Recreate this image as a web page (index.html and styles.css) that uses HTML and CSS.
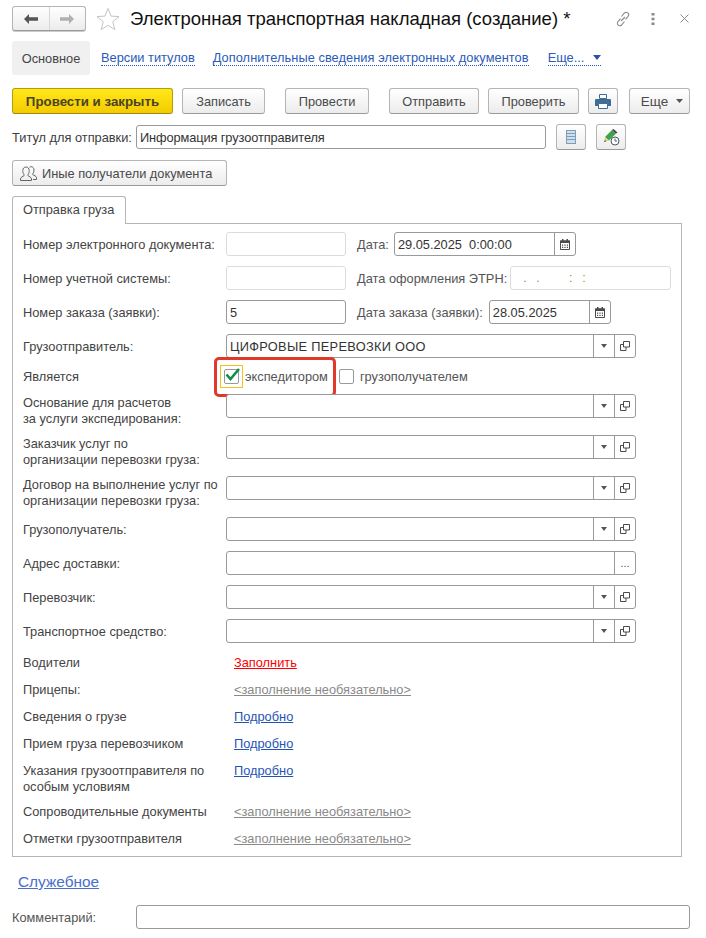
FILE: index.html
```html
<!DOCTYPE html>
<html lang="ru">
<head>
<meta charset="utf-8">
<title>Электронная транспортная накладная (создание)</title>
<link rel="stylesheet" href="styles.css">
</head>
<body>
<svg class="defs" width="0" height="0" aria-hidden="true">
  <symbol id="i-cal" viewBox="0 0 10 11">
    <path d="M.5 2h9v8.500h-9z" fill="none" stroke="#4a4a4a"/>
    <path d="M0 1.500h10V4H0z" fill="#4a4a4a"/>
    <path d="M2 0h1.500v2H2zM6.500 0H8v2H6.500z" fill="#4a4a4a"/>
    <path d="M2 5.500h1.200v1.200H2zM4.400 5.500h1.200v1.200H4.400zM6.800 5.500H8v1.200H6.800zM2 7.800h1.200V9H2zM4.400 7.800h1.200V9H4.400zM6.800 7.800H8V9H6.800z" fill="#4a4a4a"/>
  </symbol>
  <symbol id="i-open" viewBox="0 0 10 10">
    <path d="M3.500 .5h6v5.500h-6z" fill="none" stroke="#4a4a4a"/>
    <path d="M3.500 3.500h-3v6h5.500V6" fill="none" stroke="#4a4a4a"/>
  </symbol>
</svg>

<header class="head">
  <div class="nav">
    <span class="nav-cell">
      <svg width="14" height="10" viewBox="0 0 14 10"><path d="M0 5l5-5v3.200h9v3.600H5V10z" fill="#555"/></svg>
    </span>
    <span class="nav-cell nav-next">
      <svg width="14" height="10" viewBox="0 0 14 10"><path d="M14 5L9 0v3.200H0v3.600h9V10z" fill="#b0b0b0"/></svg>
    </span>
  </div>
  <svg class="star" width="24" height="24" viewBox="0 0 24 24"><path d="M12 1.500l3 7.600 8 .5-6.200 5.100 2 7.900L12 18.300 5.200 22.600l2-7.900L1 9.600l8-.5z" fill="#fff" stroke="#c4c4c4"/></svg>
  <h1 class="title">Электронная транспортная накладная (создание) *</h1>
  <div class="win-tools">
    <svg width="16" height="16" viewBox="0 0 16 16"><g fill="none" stroke="#8a8a8a" stroke-width="1.100"><path d="M6.500 5.500l2.800-3.300a2.400 2.400 0 0 1 3.700 3.200l-2.500 3"/><path d="M9.500 10.500l-2.800 3.300a2.400 2.400 0 0 1-3.700-3.200l2.500-3"/><path d="M6 10l4-4"/></g></svg>
    <svg width="4" height="12" viewBox="0 0 4 12"><path d="M.5 0h3v2.500h-3zM.5 4.700h3v2.500h-3zM.5 9.400h3V12h-3z" fill="#8a8a8a"/></svg>
    <svg width="9" height="9" viewBox="0 0 9 9"><path d="M.5.500l8 8M8.500.500l-8 8" stroke="#8a8a8a" fill="none"/></svg>
  </div>
</header>

<nav class="tabs">
  <a class="tab tab-active">Основное</a>
  <a class="tab-link">Версии титулов</a>
  <a class="tab-link tab-long">Дополнительные сведения электронных документов</a>
  <a class="tab-link tab-more">Еще...<svg class="more-tri" width="8" height="5" viewBox="0 0 8 5"><path d="M0 0h8L4 5z" fill="#2a52a8"/></svg></a>
</nav>

<div class="toolbar">
  <button class="btn btn-main">Провести и закрыть</button>
  <button class="btn w-zap">Записать</button>
  <button class="btn w-prov gap-l">Провести</button>
  <button class="btn w-otp gap-l">Отправить</button>
  <button class="btn w-prv">Проверить</button>
  <button class="btn btn-icon">
    <svg width="16" height="15" viewBox="0 0 16 15"><path d="M4.500 .5h7v4h-7z" fill="#fff" stroke="#3f6d96"/><path d="M1 5h14a1 1 0 0 1 1 1v6h-3v-2H3v2H0V6a1 1 0 0 1 1-1z" fill="#3f6d96"/><path d="M3.500 9.500h9v5h-9z" fill="#fff" stroke="#3f6d96"/></svg>
  </button>
  <button class="btn w-more gap-more">Еще<svg class="btn-tri" width="7" height="4" viewBox="0 0 7 4"><path d="M0 0h7L3.500 4z" fill="#555"/></svg></button>
</div>

<div class="title-row">
  <label class="title-label">Титул для отправки:</label>
  <div class="field f-title"><span class="val val-title">Информация грузоотправителя</span></div>
  <button class="btn btn-icon btn-sm">
    <svg width="10" height="14" viewBox="0 0 10 14"><path d="M0 0h10v14H0z" fill="#7d9db8"/><path d="M1 1h8v2H1zM1 4h8v2H1zM1 7h8v2H1zM1 10h8v3H1z" fill="#cfe0ec"/></svg>
  </button>
  <button class="btn btn-icon btn-sm">
    <svg width="17" height="17" viewBox="0 0 17 17"><path d="M9 1l4 3.500-7 7L2 8z" fill="#3fa34d"/><path d="M9 1l1.500-1 4 3.500L13 4.500z" fill="#444"/><path d="M2 8l4 3.500L1 13z" fill="#e8c98a"/><path d="M1 13l1-2 1 1.500z" fill="#444"/><circle cx="12" cy="12" r="4" fill="#fff" stroke="#555"/><path d="M12 9.500V12h2" fill="none" stroke="#2f6f9f"/></svg>
  </button>
</div>

<button class="btn btn-others">
  <svg width="17" height="15" viewBox="0 0 17 15"><g fill="none" stroke="#666"><path d="M.5 14.500v-1.500c0-1.800 2.500-2.600 3.500-3.300V8.500C3 7.500 2.800 6 2.800 4.500 2.800 2.500 4 1 6 1s3.200 1.500 3.200 3.500c0 1.500-.2 3-1.200 4v1.200c1 .7 3.500 1.500 3.500 3.300v1.500z"/><path d="M9.500 1.200C10 .8 10.500.7 11 .7c2 0 3 1.500 3 3.300 0 1.500-.3 2.700-1.200 3.600v1.100c1 .7 3.700 1.300 3.700 3v1.800H13"/></g></svg>
  Иные получатели документа
</button>

<div class="page-tab">Отправка груза</div>

<section class="panel">
  <div class="row">
    <label class="lbl">Номер электронного документа:</label>
    <div class="field f-short off"></div>
    <label class="lbl-r lbl-date">Дата:</label>
    <div class="field f-date1"><span class="val">29.05.2025&nbsp; 0:00:00</span><span class="fbtn"><svg width="10" height="11"><use href="#i-cal"/></svg></span></div>
  </div>
  <div class="row">
    <label class="lbl">Номер учетной системы:</label>
    <div class="field f-short off"></div>
    <label class="lbl-r lbl-etrn">Дата оформления ЭТРН:</label>
    <div class="field f-etrn off"><span class="mask">. .    : :</span></div>
  </div>
  <div class="row">
    <label class="lbl">Номер заказа (заявки):</label>
    <div class="field f-short"><span class="val">5</span></div>
    <label class="lbl-r lbl-order">Дата заказа (заявки):</label>
    <div class="field f-date2"><span class="val">28.05.2025</span><span class="fbtn"><svg width="10" height="11"><use href="#i-cal"/></svg></span></div>
  </div>
  <div class="row">
    <label class="lbl">Грузоотправитель:</label>
    <div class="field f-long"><span class="val val-caps">ЦИФРОВЫЕ ПЕРЕВОЗКИ ООО</span><span class="fbtn fbtn-dd"><i class="tri"></i></span><span class="fbtn fbtn-dd"><svg width="10" height="10"><use href="#i-open"/></svg></span></div>
  </div>
  <div class="row row-check">
    <label class="lbl">Является</label>
    <span class="check-focus"><span class="check">
      <svg class="tick" width="17" height="15" viewBox="0 0 17 15"><path d="M2.500 7.500l4 4.500L15 2" fill="none" stroke="#0f8f45" stroke-width="2.600"/></svg>
    </span></span>
    <span class="check-text">экспедитором</span>
    <span class="check check-2"></span>
    <span class="check-text">грузополучателем</span>
    <span class="callout"></span>
  </div>
  <div class="row row-2">
    <label class="lbl">Основание для расчетов<br>за услуги экспедирования:</label>
    <div class="field f-long"><span class="val"></span><span class="fbtn fbtn-dd"><i class="tri"></i></span><span class="fbtn fbtn-dd"><svg width="10" height="10"><use href="#i-open"/></svg></span></div>
  </div>
  <div class="row row-2">
    <label class="lbl">Заказчик услуг по<br>организации перевозки груза:</label>
    <div class="field f-long"><span class="val"></span><span class="fbtn fbtn-dd"><i class="tri"></i></span><span class="fbtn fbtn-dd"><svg width="10" height="10"><use href="#i-open"/></svg></span></div>
  </div>
  <div class="row row-2">
    <label class="lbl">Договор на выполнение услуг по<br>организации перевозки груза:</label>
    <div class="field f-long"><span class="val"></span><span class="fbtn fbtn-dd"><i class="tri"></i></span><span class="fbtn fbtn-dd"><svg width="10" height="10"><use href="#i-open"/></svg></span></div>
  </div>
  <div class="row">
    <label class="lbl">Грузополучатель:</label>
    <div class="field f-long"><span class="val"></span><span class="fbtn fbtn-dd"><i class="tri"></i></span><span class="fbtn fbtn-dd"><svg width="10" height="10"><use href="#i-open"/></svg></span></div>
  </div>
  <div class="row">
    <label class="lbl">Адрес доставки:</label>
    <div class="field f-long"><span class="val"></span><span class="fbtn fbtn-dd fbtn-dots">...</span></div>
  </div>
  <div class="row">
    <label class="lbl">Перевозчик:</label>
    <div class="field f-long"><span class="val"></span><span class="fbtn fbtn-dd"><i class="tri"></i></span><span class="fbtn fbtn-dd"><svg width="10" height="10"><use href="#i-open"/></svg></span></div>
  </div>
  <div class="row">
    <label class="lbl">Транспортное средство:</label>
    <div class="field f-long"><span class="val"></span><span class="fbtn fbtn-dd"><i class="tri"></i></span><span class="fbtn fbtn-dd"><svg width="10" height="10"><use href="#i-open"/></svg></span></div>
  </div>

  <div class="links">
    <div class="lrow"><span class="ltext">Водители</span><a class="lk lk-red">Заполнить</a></div>
    <div class="lrow"><span class="ltext">Прицепы:</span><a class="lk lk-gray">&lt;заполнение необязательно&gt;</a></div>
    <div class="lrow"><span class="ltext">Сведения о грузе</span><a class="lk">Подробно</a></div>
    <div class="lrow"><span class="ltext">Прием груза перевозчиком</span><a class="lk">Подробно</a></div>
    <div class="lrow"><span class="ltext">Указания грузоотправителя по<br>особым условиям</span><a class="lk">Подробно</a></div>
    <div class="lrow"><span class="ltext">Сопроводительные документы</span><a class="lk lk-gray">&lt;заполнение необязательно&gt;</a></div>
    <div class="lrow"><span class="ltext">Отметки грузоотправителя</span><a class="lk lk-gray">&lt;заполнение необязательно&gt;</a></div>
  </div>
</section>

<a class="service">Служебное</a>

<div class="comment-row">
  <label class="comment-label">Комментарий:</label>
  <div class="field f-comment"></div>
</div>
</body>
</html>
```

FILE: styles.css
```css
* { box-sizing: border-box; }
html, body { margin: 0; padding: 0; background: #fff; }
body {
  width: 706px;
  height: 938px;
  overflow: hidden;
  padding: 6px 16px 0 12px;
  font-family: "Liberation Sans", Arial, sans-serif;
  font-size: 12.8px;
  color: #3c3c3c;
}
.defs { position: absolute; }

/* Header */
.head { display: flex; align-items: center; height: 25px; }
.nav {
  display: flex;
  width: 74px;
  height: 25px;
  border: 1px solid #b5b5b5;
  border-bottom-color: #9a9a9a;
  border-radius: 3px;
  background: linear-gradient(#fff, #ececec);
  box-shadow: 0 1px 0 #ccc;
}
.nav-cell { display: flex; align-items: center; justify-content: center; width: 37px; }
.nav-next { border-left: 1px solid #d6d6d6; }
.star { margin-left: 10px; }
.title {
  margin: 0 0 0 10px;
  font-size: 18.5px;
  font-weight: 400;
  color: #111;
  white-space: nowrap;
}
.win-tools { display: flex; align-items: center; margin-left: 45px; }
.win-tools svg:nth-child(2) { margin-left: 20px; }
.win-tools svg:nth-child(3) { margin-left: 25px; }

/* Tabs */
.tabs { display: flex; align-items: center; height: 34px; margin-top: 10px; }
.tab { display: flex; align-items: center; justify-content: center; width: 78px; height: 34px; }
.tab-active { background: #f0f0f0; border-radius: 3px; color: #444; }
.tab-link {
  margin-left: 11px;
  line-height: 15px;
  color: #2a5bb8;
  border-bottom: 1px dotted #2a5bb8;
}
.tab-link + .tab-link { margin-left: 18px; }
.tab-link.tab-long { letter-spacing: .06px; }
.tab-link.tab-more { display: flex; align-items: center; margin-left: 19px; }
.more-tri { margin-left: 9px; }

/* Buttons */
.btn {
  display: inline-flex;
  align-items: center;
  justify-content: center;
  height: 26px;
  padding: 0;
  font: inherit;
  color: #4a4a4a;
  background: linear-gradient(#fff, #ececec);
  border: 1px solid #b5b5b5;
  border-bottom-color: #9a9a9a;
  border-radius: 3px;
}
.toolbar { display: flex; margin-top: 13px; }
.toolbar .btn { margin-right: 9px; }
.toolbar .gap-l { margin-left: 11px; }
.toolbar .gap-more { margin-left: 2px; margin-right: 0; }
.btn-main {
  width: 161px;
  font-size: 13.3px;
  font-weight: 700;
  color: #4a4420;
  background: linear-gradient(#ffe81a, #f3cb00);
  border-color: #b39b14;
  border-bottom-color: #a08a10;
}
.w-zap { width: 83px; }
.w-prov { width: 84px; }
.w-otp { width: 90px; }
.w-prv { width: 91px; }
.btn-icon { width: 30px; }
.w-more { width: 61px; padding-left: 5px; font-size: 13.5px; }
.btn-tri { margin-left: 8px; }

.title-row { display: flex; align-items: center; height: 26px; margin-top: 10px; }
.title-label { width: 124px; padding-top: 1px; white-space: nowrap; }
.f-title { width: 410px; height: 24px; border-color: #dcdcdc; }
.btn-sm { margin-left: 10px; }
.btn-others { width: 215px; margin-top: 10px; justify-content: flex-start; padding-left: 7px; }
.btn-others svg { margin-right: 5px; }

.page-tab {
  display: flex;
  align-items: center;
  width: 114px;
  height: 28px;
  margin-top: 10px;
  padding: 0 0 2px 10px;
  color: #444;
  background: #fff;
  border: 1px solid #b5b5b5;
  border-bottom: 0;
  border-radius: 3px 3px 0 0;
  position: relative;
  z-index: 1;
}

/* Panel */
.panel {
  width: 670px;
  height: 634px;
  margin-top: -1px;
  padding: 8px 10px;
  border: 1px solid #b5b5b5;
}
.row { display: flex; align-items: center; height: 24px; margin-bottom: 10px; position: relative; }
.row-2 { height: 31px; align-items: flex-start; }
.row-check { height: 16px; }
.lbl { width: 203px; flex: none; padding-top: 1px; line-height: 16px; color: #444; white-space: nowrap; }
.lbl-r { margin-left: 11px; padding-top: 1px; color: #555; white-space: nowrap; }
.lbl-date { margin-right: 5px; }
.lbl-etrn { margin-right: 3px; }
.lbl-order { margin-right: 6px; }

.field {
  display: flex;
  align-items: stretch;
  flex: none;
  height: 24px;
  background: #fff;
  border: 1px solid #999;
  border-radius: 3px;
  overflow: hidden;
}
.off { border-color: #dcdcdc; }
.val { flex: 1; padding: 1px 0 0 3px; line-height: 22px; color: #333; white-space: nowrap; overflow: hidden; }
.val-caps { letter-spacing: .3px; }
.val-title { letter-spacing: -.1px; }
.f-short { width: 120px; }
.f-date1 { width: 182px; }
.f-date2 { width: 122px; }
.f-etrn { width: 161px; }
.f-long { width: 410px; }
.f-comment { width: 554px; }
.mask { padding-left: 12px; line-height: 22px; letter-spacing: 3px; color: #b98a3a; white-space: pre; }
.fbtn {
  display: flex;
  align-items: center;
  justify-content: center;
  flex: none;
  width: 21px;
  border-left: 1px solid #999;
}
.fbtn-dots { color: #555; font-size: 11px; }
.tri {
  display: block;
  width: 0;
  height: 0;
  border-left: 3.5px solid transparent;
  border-right: 3.5px solid transparent;
  border-top: 4px solid #555;
}

/* Checkboxes */
.check-focus {
  display: flex;
  align-items: center;
  justify-content: center;
  flex: none;
  width: 23px;
  height: 23px;
  margin-left: -6px;
  border: 1px solid #f2c41a;
}
.check {
  display: block;
  position: relative;
  flex: none;
  width: 15px;
  height: 15px;
  border: 1px solid #999;
  border-radius: 2px;
}
.tick { position: absolute; left: -1px; top: -3px; }
.check-text { margin-left: 2px; padding-top: 1px; line-height: 16px; color: #555; white-space: nowrap; }
.check-2 { margin-left: 11px; margin-right: 4px; }
.callout {
  position: absolute;
  left: 191px;
  top: -11px;
  width: 122px;
  height: 40px;
  border: 3px solid #e0392b;
  border-radius: 5px;
}

/* Link rows */
.links { display: flex; flex-direction: column; gap: 10px; margin-top: 12px; }
.lrow { display: flex; min-height: 17px; }
.ltext { width: 211px; flex: none; color: #444; line-height: 15.500px; white-space: nowrap; }
.lk { line-height: 15.500px; color: #1f55b5; text-decoration: underline; }
.lk-red { color: #f00; }
.lk-gray { color: #8a8a8a; }

/* Footer */
.service {
  display: block;
  width: max-content;
  margin: 16px 0 0 6px;
  font-size: 15.4px;
  line-height: 18px;
  color: #4a6fc9;
  text-decoration: underline;
}
.comment-row { display: flex; align-items: center; margin-top: 14px; }
.comment-label { width: 124px; color: #555; }
```
